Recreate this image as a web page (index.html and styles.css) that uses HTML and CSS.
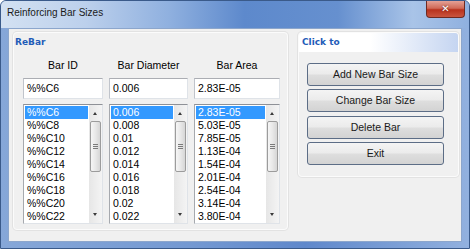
FILE: index.html
```html
<!DOCTYPE html>
<html>
<head>
<meta charset="utf-8"/>
<title>Reinforcing Bar Sizes</title>
<link rel="stylesheet" href="styles.css">
</head>
<body>
<div class="Window">
    <div class="TitleBar">
        <span class="Caption">Reinforcing Bar Sizes</span>
        <div class="CloseBtn">&#x2715;</div>
    </div>
    <div class="Client">
        <div class="Group RebarGroup">
            <div class="GroupHead">ReBar</div>
            <div class="Columns">
                <div class="Col ColId">
                    <div class="ColHead">Bar ID</div>
                    <div class="Field">%%C6</div>
                    <div class="ListBox">
                        <ul class="Items">
                            <li class="Selected">%%C6</li>
                            <li>%%C8</li>
                            <li>%%C10</li>
                            <li>%%C12</li>
                            <li>%%C14</li>
                            <li>%%C16</li>
                            <li>%%C18</li>
                            <li>%%C20</li>
                            <li>%%C22</li>
                        </ul>
                        <div class="ScrollBar">
                            <div class="Arrow Up"></div>
                            <div class="Thumb"><span></span><span></span><span></span></div>
                            <div class="Track"></div>
                            <div class="Arrow Down"></div>
                        </div>
                    </div>
                </div>
                <div class="Col ColDia">
                    <div class="ColHead">Bar Diameter</div>
                    <div class="Field">0.006</div>
                    <div class="ListBox">
                        <ul class="Items">
                            <li class="Selected">0.006</li>
                            <li>0.008</li>
                            <li>0.01</li>
                            <li>0.012</li>
                            <li>0.014</li>
                            <li>0.016</li>
                            <li>0.018</li>
                            <li>0.02</li>
                            <li>0.022</li>
                        </ul>
                        <div class="ScrollBar">
                            <div class="Arrow Up"></div>
                            <div class="Thumb"><span></span><span></span><span></span></div>
                            <div class="Track"></div>
                            <div class="Arrow Down"></div>
                        </div>
                    </div>
                </div>
                <div class="Col ColArea">
                    <div class="ColHead">Bar Area</div>
                    <div class="Field">2.83E-05</div>
                    <div class="ListBox">
                        <ul class="Items">
                            <li class="Selected">2.83E-05</li>
                            <li>5.03E-05</li>
                            <li>7.85E-05</li>
                            <li>1.13E-04</li>
                            <li>1.54E-04</li>
                            <li>2.01E-04</li>
                            <li>2.54E-04</li>
                            <li>3.14E-04</li>
                            <li>3.80E-04</li>
                        </ul>
                        <div class="ScrollBar">
                            <div class="Arrow Up"></div>
                            <div class="Thumb"><span></span><span></span><span></span></div>
                            <div class="Track"></div>
                            <div class="Arrow Down"></div>
                        </div>
                    </div>
                </div>
            </div>
        </div>

        <div class="Group ActionGroup">
            <div class="GroupHead Shaded">Click to</div>
            <div class="Buttons">
                <div class="Btn">Add New Bar Size</div>
                <div class="Btn">Change Bar Size</div>
                <div class="Btn">Delete Bar</div>
                <div class="Btn">Exit</div>
            </div>
        </div>
    </div>
</div>
</body>
</html>
```

FILE: styles.css
```css
html, body { margin: 0; padding: 0; background: #ffffff; }
body { width: 470px; height: 249px; overflow: hidden; font-family: "Liberation Sans", Arial, sans-serif; font-size: 10.5px; color: #000; }

.Window { width: 470px; height: 249px; box-sizing: border-box; border: 1px solid #3a5a8a; border-radius: 6px 6px 0 0;
    background: linear-gradient(to right, #86a7d8 0%, #7499d2 40%, #5f88cb 65%, #7c9fd6 85%, #92b1df 100%); }

/* title bar */
.TitleBar { height: 27px; display: flex; border-radius: 5px 5px 0 0;
    background: linear-gradient(to right, #d3e1f2 0%, #bcd0ec 18%, #8fb0df 36%, #5d89cc 52%, #6690cf 72%, #a9c4e8 88%, #8fb0df 100%); }
.Caption { flex: 1; padding: 5px 0 0 6px; font-size: 10px; line-height: 14px; color: #1a1a1a; }
.CloseBtn { width: 39px; height: 17px; margin-right: 4px; box-sizing: border-box; border: 1px solid #6e2a22; border-top: 0;
    border-radius: 0 0 4px 4px; text-align: center; color: #fff; font-family: "DejaVu Sans", sans-serif; font-size: 10px;
    font-weight: bold; line-height: 16px; text-shadow: 0 0 2px #5a1a12;
    background: linear-gradient(#e4a196 0%, #d06a58 45%, #b8321d 55%, #c9553f 100%); }

/* client area */
.Client { width: 454px; height: 214px; margin-left: 7px; box-sizing: border-box; border: 1px solid #8ca6cc;
    background: #f0f0f0; display: flex; align-items: flex-start; padding: 3px 0 0 4px; gap: 10px; }

.Group { box-sizing: border-box; border: 1px solid #fbfbfb; border-radius: 4px; box-shadow: 0 0 0 1px #e2e2e2; }
.RebarGroup { width: 275px; height: 198px; }
.ActionGroup { width: 161px; height: 145px; }
.GroupHead { height: 19px; padding-left: 1px; font-family: "DejaVu Sans", sans-serif; font-size: 9px; font-weight: bold;
    line-height: 19px; color: #1f5cb8; }
.Shaded { padding-left: 3px; border-radius: 3px 3px 0 0; background: linear-gradient(to right, #ffffff 45%, #c5d5f1 100%); }

/* columns of the rebar table */
.Columns { display: flex; gap: 6px; margin-top: 6px; padding-left: 9px; }
.ColId { width: 80px; }
.ColDia { width: 79px; }
.ColArea { width: 86px; }
.ColHead { height: 14px; line-height: 14px; text-align: center; margin-bottom: 6px; }
.Field { height: 21px; box-sizing: border-box; padding-left: 3px; line-height: 19px; background: #fff;
    border: 1px solid #dfe3e8; border-top-color: #abadb3; border-left-color: #c0c4cb; }
.ListBox { display: flex; height: 120px; margin-top: 5px; box-sizing: border-box; background: #fff;
    border: 1px solid #dfe3e8; border-top-color: #8e9197; border-left-color: #a6a9ae; }
.Items { flex: 1; list-style: none; margin: 0; padding: 1px 1px 0 1px; overflow: hidden; }
.Items li { height: 13px; line-height: 13px; padding-left: 2px; white-space: nowrap; }
.Items li.Selected { background: #3399ff; color: #fff; }

/* scroll bar */
.ScrollBar { width: 13px; display: flex; flex-direction: column; background: linear-gradient(to right, #e6e6e6, #f4f4f4); }
.Arrow { height: 16px; position: relative; }
.Arrow::after { content: ""; position: absolute; left: 4px; width: 0; height: 0; border-left: 2.5px solid transparent; border-right: 2.5px solid transparent; }
.Up::after { top: 7px; border-bottom: 3px solid #3a3a3a; }
.Down::after { top: 6px; border-top: 3px solid #3a3a3a; }
.Thumb { height: 51px; margin: 0 1px; box-sizing: border-box; border: 1px solid #9c9c9c; border-radius: 2px;
    display: flex; flex-direction: column; align-items: center; justify-content: center; gap: 1px;
    background: linear-gradient(to right, #f6f6f6 0%, #e8e8e8 50%, #d6d6d6 100%); }
.Thumb span { width: 5px; height: 1px; background: #7a7a7a; }
.Track { flex: 1; }

/* buttons */
.Buttons { display: flex; flex-direction: column; gap: 3.3px; padding: 11px 0 0 8px; }
.Btn { width: 137px; height: 23px; box-sizing: border-box; border: 1px solid #5c6d86; border-radius: 3px; text-align: center;
    line-height: 21px; color: #1a1a1a; background: linear-gradient(#f4f4f4 0%, #ebebeb 48%, #dedede 52%, #d3d3d3 100%); }
```
